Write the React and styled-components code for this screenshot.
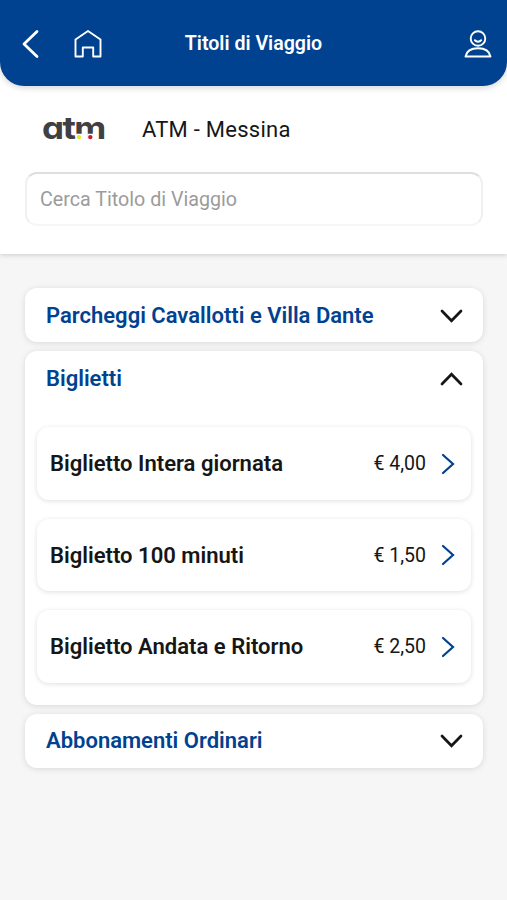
import React, { useState } from "react";
import styled, { createGlobalStyle } from "styled-components";

const GlobalStyle = createGlobalStyle`
  * { box-sizing: border-box; }
  body {
    margin: 0;
    background: #f6f6f6;
    font-family: Roboto, "Liberation Sans", sans-serif;
    color: #161616;
  }
  button, input { font: inherit; color: inherit; }
`;

const Screen = styled.div`
  min-height: 900px;
  background: #f6f6f6;
`;

const Top = styled.div`
  height: 254px;
  background: #fff;
  box-shadow: 0 1px 5px rgba(0, 0, 0, 0.18);
`;

const Header = styled.header`
  height: 86px;
  padding: 2px 15px 0 20px;
  display: grid;
  grid-template-columns: 1fr auto 1fr;
  align-items: center;
  background: #00428f;
  border-radius: 0 0 24px 24px;
  box-shadow: 0 2px 6px rgba(0, 0, 0, 0.16);
`;

const HeaderSide = styled.div`
  display: flex;
  align-items: center;
  gap: 33px;
  justify-content: ${(p) => (p.$end ? "flex-end" : "flex-start")};
`;

const IconButton = styled.button`
  display: flex;
  padding: 0;
  border: 0;
  background: none;
  color: #fff;
  svg { display: block; }
`;

const Title = styled.h1`
  margin: 0 5px 0 0;
  font-size: 19.6px;
  line-height: 24px;
  font-weight: 600;
  color: #fff;
  white-space: nowrap;
`;

const Company = styled.div`
  height: 86px;
  padding-left: 42px;
  display: flex;
  align-items: center;
  gap: 36px;
`;

const CompanyName = styled.span`
  padding-top: 1px;
  font-size: 22px;
  line-height: 28px;
  letter-spacing: 0.25px;
`;

const Search = styled.input`
  display: block;
  width: 458px;
  height: 54px;
  margin: 0 0 0 25px;
  padding: 0 13px;
  border: 2px solid #f0f0f0;
  border-top-color: #dedede;
  border-bottom-color: #f6f6f6;
  border-radius: 12px;
  background: #fff;
  font-size: 19.7px;
  outline: none;
  &::placeholder { color: #9b9b9b; opacity: 1; }
`;

const Groups = styled.main`
  display: flex;
  flex-direction: column;
  gap: 9px;
  padding: 34px 24px 0 25px;
`;

const Group = styled.section`
  background: #fff;
  border-radius: 12px;
  box-shadow: 0 1px 6px rgba(0, 0, 0, 0.12);
`;

const GroupHeader = styled.button`
  width: 100%;
  height: 54px;
  padding: 1px 20px 0 21px;
  display: flex;
  align-items: center;
  justify-content: space-between;
  border: 0;
  background: none;
  color: #161616;
`;

const GroupName = styled.span`
  font-size: 22px;
  line-height: 28px;
  font-weight: 600;
  color: #00428f;
  white-space: nowrap;
`;

const Tickets = styled.div`
  display: flex;
  flex-direction: column;
  gap: 19px;
  padding: 22px 12px;
`;

const Ticket = styled.button`
  height: 72.6px;
  padding: 1px 16px 0 13px;
  display: flex;
  align-items: center;
  border: 0;
  border-radius: 12px;
  background: #fff;
  box-shadow: 0 1px 5px rgba(0, 0, 0, 0.13);
  color: #00428f;
`;

const TicketName = styled.span`
  flex: 1;
  text-align: left;
  font-size: 22.05px;
  font-weight: 600;
  color: #161616;
`;

const Price = styled.span`
  margin-right: 15px;
  font-size: 19.5px;
  color: #161616;
`;

const LogoText = styled.text`
  font-family: Inter, "Liberation Sans", sans-serif;
  font-weight: 700;
  font-size: 31px;
  font-feature-settings: "cv11" 1;
  fill: #404042;
`;

const Logo = () => (
  <svg width="64" height="28" viewBox="0 0 64 28" overflow="visible" aria-label="atm">
    <LogoText x="0" y="24.300" textLength="22" lengthAdjust="spacingAndGlyphs">a</LogoText>
    <LogoText x="20.500" y="24.300" textLength="13.500" lengthAdjust="spacingAndGlyphs">t</LogoText>
    <LogoText x="32.300" y="24.300" textLength="32" lengthAdjust="spacingAndGlyphs">m</LogoText>
    <path d="M34 18.800h6v7h-6zM45.300 18.800h6v7h-6z" fill="#fff" />
    <circle cx="37" cy="22.100" r="2.200" fill="#e9e52c" />
    <circle cx="48.300" cy="22.100" r="2.200" fill="#cf1735" />
  </svg>
);

const BackIcon = () => (
  <svg width="20" height="30" viewBox="0 0 20 30" fill="none" stroke="currentColor" strokeWidth="2.8" strokeLinecap="round" strokeLinejoin="round">
    <path d="M17 2.500 4 15l13 12.500" />
  </svg>
);

const HomeIcon = () => (
  <svg width="30" height="30" viewBox="0 0 30 30" fill="none" stroke="currentColor" strokeWidth="1.900" strokeLinejoin="round">
    <path d="M2.500 10.500 15 2l12.500 8.500v17h-7.300v-9H9.800v9H2.500z" />
  </svg>
);

const UserIcon = () => (
  <svg width="28" height="30" viewBox="0 0 28 30" fill="none" stroke="currentColor" strokeWidth="1.900" strokeLinecap="round" strokeLinejoin="round">
    <circle cx="14" cy="9.500" r="7.300" />
    <path d="M10.800 11.200c1.600 2 4.800 2 6.400 0M1.500 27.500c1-5.500 6-8.300 12.500-8.300s11.500 2.800 12.500 8.300z" />
  </svg>
);

const Chevron = ({ up }) => (
  <svg width="23" height="14" viewBox="0 0 23 14" fill="none" stroke="currentColor" strokeWidth="2.700" strokeLinecap="round">
    <path d={up ? "M2 12 11.500 2.200 21 12" : "M2 2l9.500 9.800L21 2"} />
  </svg>
);

const Arrow = () => (
  <svg width="14" height="22" viewBox="0 0 14 22" fill="none" stroke="currentColor" strokeWidth="2.200" strokeLinecap="round">
    <path d="M2 2l10 9L2 20" />
  </svg>
);

const groups = [
  { name: "Parcheggi Cavallotti e Villa Dante", tickets: [] },
  {
    name: "Biglietti",
    tickets: [
      { name: "Biglietto Intera giornata", price: "€ 4,00" },
      { name: "Biglietto 100 minuti", price: "€ 1,50" },
      { name: "Biglietto Andata e Ritorno", price: "€ 2,50" },
    ],
  },
  { name: "Abbonamenti Ordinari", tickets: [] },
];

export default function App() {
  const [open, setOpen] = useState("Biglietti");
  return (
    <Screen>
      <GlobalStyle />
      <Top>
        <Header>
          <HeaderSide>
            <IconButton aria-label="Indietro"><BackIcon /></IconButton>
            <IconButton aria-label="Home"><HomeIcon /></IconButton>
          </HeaderSide>
          <Title>Titoli di Viaggio</Title>
          <HeaderSide $end>
            <IconButton aria-label="Profilo"><UserIcon /></IconButton>
          </HeaderSide>
        </Header>
        <Company>
          <Logo />
          <CompanyName>ATM - Messina</CompanyName>
        </Company>
        <Search placeholder="Cerca Titolo di Viaggio" />
      </Top>
      <Groups>
        {groups.map((g) => (
          <Group key={g.name}>
            <GroupHeader onClick={() => setOpen(open === g.name ? "" : g.name)}>
              <GroupName>{g.name}</GroupName>
              <Chevron up={open === g.name} />
            </GroupHeader>
            {open === g.name && g.tickets.length > 0 && (
              <Tickets>
                {g.tickets.map((t) => (
                  <Ticket key={t.name}>
                    <TicketName>{t.name}</TicketName>
                    <Price>{t.price}</Price>
                    <Arrow />
                  </Ticket>
                ))}
              </Tickets>
            )}
          </Group>
        ))}
      </Groups>
    </Screen>
  );
}
